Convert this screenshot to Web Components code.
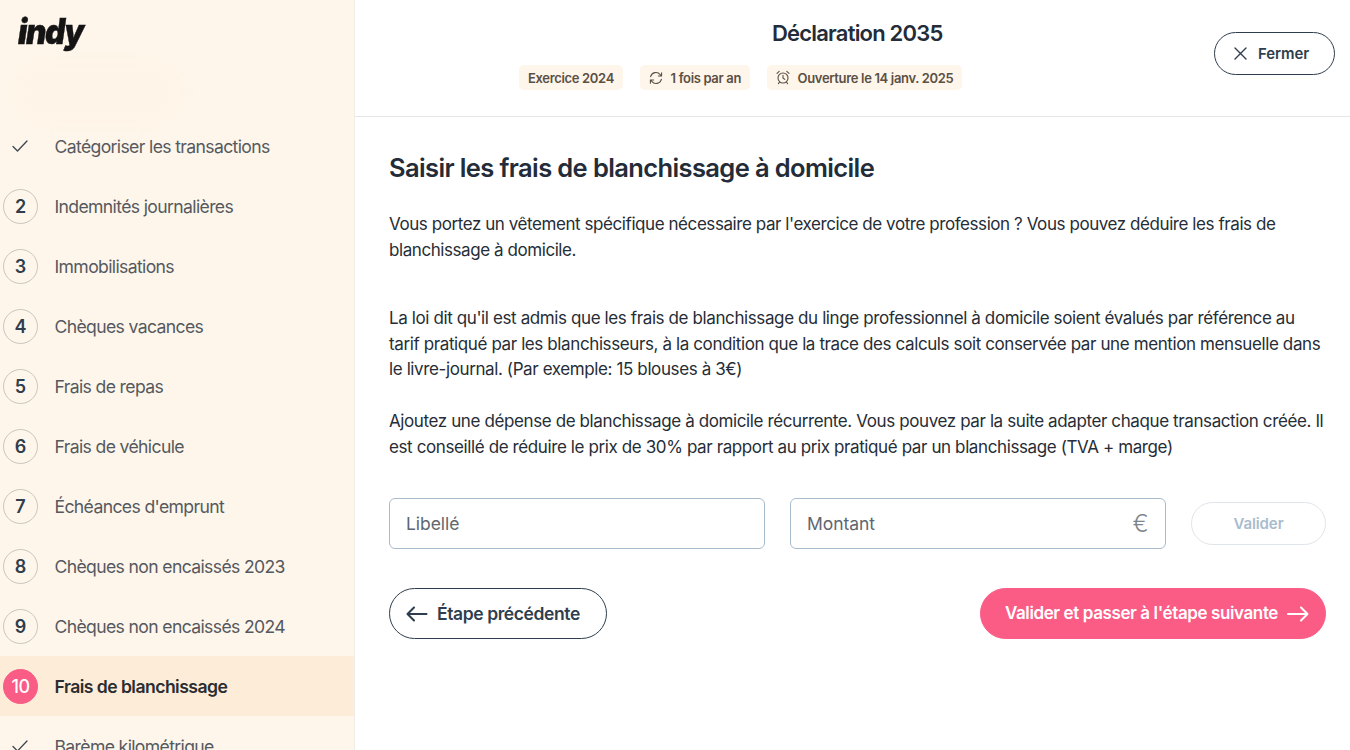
<!DOCTYPE html>
<html lang="fr"><head><meta charset="utf-8"><title>Déclaration 2035</title>
<style>
html,body{margin:0;height:100%;overflow:hidden;background:#fff}
body{font-family:Inter,"Liberation Sans",sans-serif}
</style></head><body>
<app-shell>
  <side-nav slot="side">
    <nav-step state="done">Catégoriser les transactions</nav-step>
    <nav-step n="2">Indemnités journalières</nav-step>
    <nav-step n="3">Immobilisations</nav-step>
    <nav-step n="4">Chèques vacances</nav-step>
    <nav-step n="5">Frais de repas</nav-step>
    <nav-step n="6">Frais de véhicule</nav-step>
    <nav-step n="7">Échéances d'emprunt</nav-step>
    <nav-step n="8">Chèques non encaissés 2023</nav-step>
    <nav-step n="9">Chèques non encaissés 2024</nav-step>
    <nav-step n="10" state="active">Frais de blanchissage</nav-step>
    <nav-step state="done">Barème kilométrique</nav-step>
  </side-nav>
  <top-bar slot="top"></top-bar>
  <form-panel slot="main"></form-panel>
</app-shell>
<script>
const def=(name,html)=>{customElements.define(name,class extends HTMLElement{
  connectedCallback(){ if(this.shadowRoot)return; const r=this.attachShadow({mode:'open'}); r.innerHTML=typeof html==='function'?html(this):html; }
})};
const arrowL='<svg width="22" height="16" viewBox="0 0 22 16" fill="none" stroke="currentColor" stroke-width="2.1" stroke-linecap="round" stroke-linejoin="round"><path d="M1.5 8H20.5M8 1.5L1.5 8L8 14.5"/></svg>';
const arrowR='<svg width="22" height="16" viewBox="0 0 22 16" fill="none" stroke="currentColor" stroke-width="2" stroke-linecap="round" stroke-linejoin="round"><path d="M1 8H20.5M14 1.5L20.5 8L14 14.5"/></svg>';
def('app-shell',`<style>
:host{display:grid;grid-template-columns:355px 995px;grid-template-rows:117px 633px;width:1350px;height:750px;overflow:hidden}
::slotted([slot=side]){grid-row:1/3}
</style><slot name="side"></slot><slot name="top"></slot><slot name="main"></slot>`);
def('side-nav',`<style>
:host{display:block;background:#fef6eb;border-right:1px solid #f0ede8;height:750px;overflow:hidden;position:relative;box-sizing:border-box}
.logo{height:116px;box-sizing:border-box;padding:9px 0 0 18px}
.logo span{display:inline-block;transform:scaleX(.9);transform-origin:0 50%;font:italic 900 35px/44px Inter,"Liberation Sans",sans-serif;color:#141414;letter-spacing:-1.6px;-webkit-text-stroke:.4px #141414}
.blob{position:absolute;left:10px;top:58px;width:175px;height:70px;border-radius:35px;background:#fff3e4;filter:blur(9px);opacity:.55}
</style><div class="blob"></div><div class="logo"><span>indy</span></div><slot></slot>`);
def('nav-step',h=>{
  const st=h.getAttribute('state'),n=h.getAttribute('n');
  const mark=st==='done'?`<svg class="chk" width="16" height="12" viewBox="0 0 16 12" fill="none" stroke="#3d4650" stroke-width="1.3" stroke-linecap="round" stroke-linejoin="round"><path d="M1 6.5L5.5 11L15 1"/></svg>`:`<span class="n">${n}</span>`;
  return `<style>
:host{display:flex;align-items:center;height:60px;box-sizing:border-box;padding-left:3px;font-size:17.6px;letter-spacing:-.64px;color:#55595f}
:host([state=active]){background:#fdecd8;color:#2b2d30;font-weight:600;letter-spacing:-.55px}
.m{width:35px;height:35px;display:flex;align-items:center;justify-content:center;margin-right:16.5px;flex:none}
.n{width:33px;height:33px;border-radius:50%;border:1px solid #c9c6bf;display:flex;align-items:center;justify-content:center;font-size:18px;font-weight:600;color:#2f3d4d;letter-spacing:0}
:host([state=active]) .n{background:#f95c85;border-color:#f95c85;color:#fff;font-weight:500;letter-spacing:-.6px}
.chk{margin-left:-1px}
</style><span class="m">${mark}</span><slot></slot>`});
def('info-chip',`<style>
:host{display:inline-flex;align-items:center;gap:7.5px;height:25px;padding:0 9px;background:#fef6eb;border-radius:5px;font-size:13px;font-weight:600;letter-spacing:-.33px;color:#5b5044;white-space:nowrap}
::slotted(svg){flex:none}
</style><slot></slot>`);
def('pill-button',`<style>
:host{display:inline-flex;align-items:center;justify-content:center;box-sizing:border-box;border-radius:999px;border:1px solid #2f3e4e;color:#2f3e4e;background:#fff;font-weight:600;white-space:nowrap}
</style><slot></slot>`);
def('top-bar',`<style>
:host{display:block;position:relative;height:117px;box-sizing:border-box;border-bottom:1px solid #e4e6ea;background:#fff}
h1{margin:20px 0 0 417px;font-size:22px;line-height:27px;font-weight:600;letter-spacing:-.8px;color:#232c38}
.chips{display:flex;gap:17px;margin:18px 0 0 164px}
.close{position:absolute;left:859px;top:32px;width:121px;height:43px;gap:11px;padding-right:6px;font-size:15px;letter-spacing:-.1px}
</style>
<h1>Déclaration 2035</h1>
<div class="chips">
<info-chip>Exercice 2024</info-chip>
<info-chip><svg width="14" height="14" viewBox="0 0 14 14" fill="none" stroke="#5b5044" stroke-width="1.1" stroke-linecap="round" stroke-linejoin="round"><path d="M1.6 5.6A5.5 5.5 0 0 1 11.2 3.6L12.6 5M12.6 1.8V5H9.4M12.4 8.4A5.5 5.5 0 0 1 2.8 10.4L1.4 9M1.4 12.2V9H4.6"/></svg>1 fois par an</info-chip>
<info-chip><svg width="14" height="15" viewBox="0 0 14 15" fill="none" stroke="#5b5044" stroke-width="1.1" stroke-linecap="round" stroke-linejoin="round"><circle cx="7" cy="8" r="5"/><path d="M7 5.2V8L8.8 9.4M1 3.4L3.2 1.4M13 3.4L10.8 1.4M3.4 12.2L2.4 13.6M10.6 12.2L11.6 13.6"/></svg>Ouverture le 14 janv. 2025</info-chip>
</div>
<pill-button class="close"><svg width="13" height="13" viewBox="0 0 13 13" fill="none" stroke="#2f3e4e" stroke-width="1.4" stroke-linecap="round"><path d="M1 1L12 12M12 1L1 12"/></svg>Fermer</pill-button>`);
def('text-field',h=>`<style>
:host{display:flex;align-items:center;justify-content:space-between;box-sizing:border-box;height:51px;padding:1px 16px 0;border:1px solid #a9bccd;border-radius:6px;font-size:17.5px;letter-spacing:-.05px;color:#5e6670;background:#fff}
.u{font-size:24px;color:#7d858c;font-weight:300}
</style><slot></slot>${h.hasAttribute('unit')?`<span class="u">${h.getAttribute('unit')}</span>`:''}`);
def('form-panel',`<style>
:host{display:block;box-sizing:border-box;padding:35px 24px 0 34px;color:#262d36;font-size:17px;line-height:25.6px;overflow:hidden}
h2{margin:0;font-size:25.5px;line-height:31px;font-weight:600;letter-spacing:-.62px;color:#232c38}
p{margin:0}
.p1{margin-top:29px;letter-spacing:-.43px}.p2{margin-top:43px;letter-spacing:-.39px}.p3{margin-top:26.5px;letter-spacing:-.39px}
.row{display:grid;grid-template-columns:375.5px 375.5px 135px;gap:25.5px;align-items:center;margin-top:37px}
.row pill-button{height:43px;padding-top:1px;border-color:#dfe5ea;color:#a9bccd;font-size:15px;letter-spacing:-.1px}
.nav{display:flex;justify-content:space-between;margin-top:39px}
.nav pill-button{height:51px;padding-top:1px}
.prev{width:218px;gap:9px;justify-content:flex-start;padding-left:16px;font-size:17.5px;letter-spacing:-.4px}
.next{width:346px;gap:9px;justify-content:flex-end;padding-right:16px;background:#fb5c85;border-color:#fb5c85;color:#fff;font-size:17px;letter-spacing:-.39px}
</style>
<h2>Saisir les frais de blanchissage à domicile</h2>
<p class="p1">Vous portez un vêtement spécifique nécessaire par l'exercice de votre profession ? Vous pouvez déduire les frais de blanchissage à domicile.</p>
<p class="p2">La loi dit qu'il est admis que les frais de blanchissage du linge professionnel à domicile soient évalués par référence au tarif pratiqué par les blanchisseurs, à la condition que la trace des calculs soit conservée par une mention mensuelle dans le livre-journal. (Par exemple: 15 blouses à 3€)</p>
<p class="p3">Ajoutez une dépense de blanchissage à domicile récurrente. Vous pouvez par la suite adapter chaque transaction créée. Il est conseillé de réduire le prix de 30% par rapport au prix pratiqué par un blanchissage (TVA + marge)</p>
<div class="row"><text-field>Libellé</text-field><text-field unit="€">Montant</text-field><pill-button>Valider</pill-button></div>
<div class="nav"><pill-button class="prev">${arrowL}<span>Étape précédente</span></pill-button><pill-button class="next"><span>Valider et passer à l'étape suivante</span>${arrowR}</pill-button></div>`);
</script>
</body></html>
